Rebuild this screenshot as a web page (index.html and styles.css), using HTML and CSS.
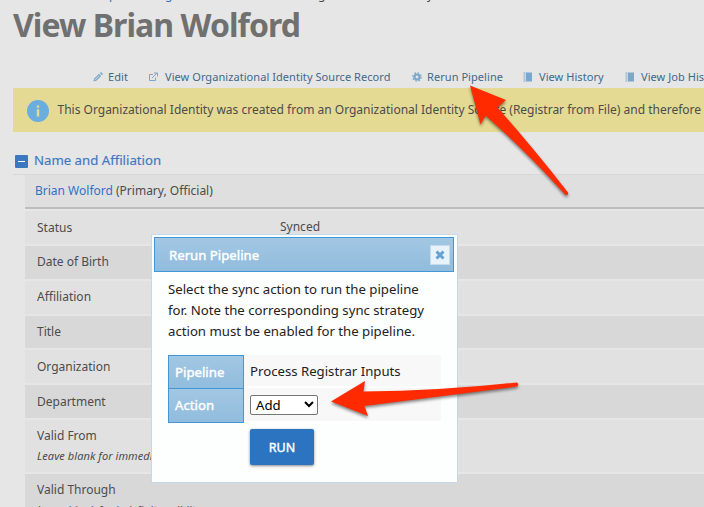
FILE: index.html
```html
<!DOCTYPE html>
<html lang="en">
<head>
<meta charset="utf-8">
<title>View Brian Wolford</title>
<link rel="stylesheet" href="styles.css">
</head>
<body>
<div class="crumbs"><span class="c1">p</span><span class="c2">g</span><span class="c3">g</span><span class="c4">y</span></div>
<h1><span>View Brian Wolford</span></h1>
<nav class="links">
  <a class="l1"><svg width="10" height="10" viewBox="0 0 10 10"><path d="M.4 9.6l.8-3 4.8-4.8 2.2 2.2-4.8 4.8z" fill="#7aa7cb"/><path d="M2 7.8l4-4" stroke="#e6e6e6" stroke-width=".9"/><path d="M6.8 1L8 0l2 2-1 1.200z" fill="#7aa7cb"/></svg><span>Edit</span></a>
  <a class="l2"><svg width="9" height="10" viewBox="0 0 9 10" fill="none" stroke="#7aa7cb"><path d="M4 2.500H.5v6h6V5.500M3 6L8 1M5 1h3.500v3.500"/></svg><span>View Organizational Identity Source Record</span></a>
  <a class="l3"><svg width="10" height="10" viewBox="0 0 10 10" fill="none" stroke="#7aa7cb"><circle cx="5" cy="5" r="2.500" stroke-width="2.200"/><circle cx="5" cy="5" r="4.100" stroke-width="1.400" stroke-dasharray="1.610"/></svg><span>Rerun Pipeline</span></a>
  <a class="l4"><svg width="10" height="10" viewBox="0 0 10 10"><path d="M3 .5h6v9H3z" fill="#7aa7cb"/><path d="M1.500 .5v9" stroke="#7aa7cb" stroke-width="2" stroke-dasharray="1 1"/></svg><span>View History</span></a>
  <a class="l5"><svg width="10" height="10" viewBox="0 0 10 10"><path d="M3 .5h6v9H3z" fill="#7aa7cb"/><path d="M1.500 .5v9" stroke="#7aa7cb" stroke-width="2" stroke-dasharray="1 1"/></svg><span>View Job History</span></a>
</nav>
<div class="notice">
  <svg width="22" height="22" viewBox="0 0 22 22"><circle cx="11" cy="11" r="11" fill="#6aaedf"/><path d="M9.800 5.500h2.400v2.200H9.800zM9.800 9.200h2.400v7.300H9.800z" fill="#e4da93"/></svg>
  <span>This Organizational Identity was created from an Organizational Identity Source (Registrar from File) and therefore</span>
</div>
<h2><i class="toggle"></i><span>Name and Affiliation</span></h2>
<div class="fields">
  <div class="name"><a>Brian Wolford</a> (Primary, Official)</div>
  <div class="row"><span class="label">Status</span><span class="value">Synced</span></div>
  <div class="row alt"><span class="label">Date of Birth</span></div>
  <div class="row"><span class="label">Affiliation</span></div>
  <div class="row alt"><span class="label">Title</span></div>
  <div class="row"><span class="label">Organization</span></div>
  <div class="row alt"><span class="label">Department</span></div>
  <div class="row tall"><span class="label">Valid From<em>Leave blank for immediate validity</em></span></div>
  <div class="row alt tall"><span class="label">Valid Through<em>Leave blank for indefinite validity</em></span></div>
</div>
<section class="dialog">
  <header><span>Rerun Pipeline</span><button class="close"><svg width="10" height="10" viewBox="0 0 10 10"><path d="M1.500 1.500l7 7M8.500 1.500l-7 7" stroke="#65a1d1" stroke-width="3"/></svg></button></header>
  <p>Select the sync action to run the pipeline<br>for. Note the corresponding sync strategy<br>action must be enabled for the pipeline.</p>
  <div class="grid">
    <div class="th">Pipeline</div><div class="td">Process Registrar Inputs</div>
    <div class="th">Action</div><div class="td"><div class="select"><span>Add</span><svg width="10" height="7" viewBox="0 0 10 7"><path d="M1 1l4 4 4-4" fill="none" stroke="#000" stroke-width="2"/></svg></div></div>
  </div>
  <button class="run">RUN</button>
</section>
<svg class="arrows" width="704" height="507" viewBox="0 0 704 507" fill="#ff2a00">
  <path d="M470 85.500L506 100 497.500 107.500Q535 150 568 192.500 569 195.500 565.500 195Q528 153 485.500 115.500L480.500 124.500z"/>
  <path d="M331 401.500L365 381 363.500 391.500Q440 391 517 382.500 519.500 384.500 517 386.500L364.500 406 368 416z"/>
</svg>
</body>
</html>
```

FILE: styles.css
```css
* { box-sizing: border-box; }
html, body { margin: 0; overflow: hidden; }
body { width: 704px; height: 507px; background: #e6e6e6; color: #4c4c4c; font: 12px/16px "Noto Sans", sans-serif; white-space: nowrap; position: relative; }
.crumbs { height: 4px; overflow: hidden; display: flex; color: #484848; line-height: 16px; }
.crumbs span { margin-top: -13px; width: 8px; }
.c1 { margin-left: 109px; color: #2d73c4; }
.c2 { margin-left: 48px; color: #2d73c4; }
.c3 { margin-left: 145px; }
.c4 { margin-left: 101px; }
h1 { margin: 0 0 0 13px; height: 61px; font-size: 32px; line-height: 41px; color: #707070; letter-spacing: -0.95px; }
.links { height: 23px; display: flex; align-items: center; color: #40698a; font-size: 11px; letter-spacing: .06px; }
.links a { display: flex; align-items: center; flex: none; }
.links svg { margin-right: 5px; }
.l1 { margin-left: 93px; width: 56px; }
.l2 { width: 263px; }
.links .l2 svg { margin-right: 7px; }
.l3 { width: 111px; }
.l4 { width: 102px; }
.l4 span, .l5 span { margin-left: 1px; }
.notice { margin-left: 13px; height: 44px; background: #e4da93; display: flex; align-items: center; padding-left: 14px; }
.notice svg { margin-right: 8.5px; flex: none; position: relative; top: 1px; }
h2 { margin: 0 0 0 13px; height: 43px; padding: 14px 0 0 2px; display: flex; align-items: center; font-size: 13.2px; font-weight: 400; color: #3c78c2; -webkit-text-stroke: .15px #3c78c2; border-bottom: 1px solid #d8d8d8; }
.toggle { width: 13px; height: 13px; margin-right: 6px; border-radius: 1px; background: linear-gradient(#fff,#fff) center/7px 1px no-repeat #3c78c2; position: relative; top: 1px; }
.fields { margin-left: 25px; }
.name { height: 34px; background: #dfdfdf; border-bottom: 2px solid #bebebe; padding: 8px 10px; margin-bottom: 2px; }
.name a { color: #3072c4; }
.row { height: 33px; margin-bottom: 2px; background: #e1e1e1; padding: 8px 12px; display: flex; }
.row:nth-child(2) { padding-top: 9px; }
.alt { background: #d8d8d8; }
.row:nth-child(5) { height: 32px; }
.row:nth-child(n+6) { padding-top: 9px; }
.row.tall:nth-child(n+6) { height: 52px; padding-top: 8px; }
.label { width: 243px; }
.value { margin-top: -1px; }
.label em { display: block; font-size: 11px; letter-spacing: .06px; margin-top: 4px; }
.dialog { position: absolute; left: 151px; top: 234px; width: 307px; height: 249px; border: 1px solid #c3d9e8; background: #fdfefe; color: #222; font-size: 13.2px; padding: 2px; }
header { width: 300px; height: 35px; border: 1px solid #4297d7; background: linear-gradient(#a2c7e3,#91bcdd); display: flex; align-items: center; justify-content: space-between; padding: 0 3px 0 14px; color: #fff; font-size: 13.2px; -webkit-text-stroke: .4px #fff; }
.close { width: 20px; height: 20px; padding: 0; border: 1px solid #c5dbec; background: #e8f2fb; display: grid; place-items: center; }
p { margin: 7px 0 13px 14px; line-height: 21px; }
.grid { margin-left: 14px; width: 273px; display: grid; grid-template-columns: 76px 1fr; grid-template-rows: 33px 35px; }
.th { border: 1px solid #4297d7; background: linear-gradient(#a2c7e3,#91bcdd); color: #fff; font-size: 13.2px; -webkit-text-stroke: .4px #fff; padding: 0 6px; display: flex; align-items: center; }
.th:nth-child(1) { border-bottom: 0; }
.th:nth-child(3) { padding-bottom: 2px; }
.td { background: #f8f8f8; padding: 0 6px; display: flex; align-items: center; border-bottom: 2px solid #fff; }
.select { width: 68px; height: 20px; border: 1px solid #767676; border-radius: 2px; background: #fff; color: #000; display: flex; align-items: center; justify-content: space-between; padding: 0 3px 0 5px; }
.run { display: block; margin: 6px 0 0 96px; width: 64px; height: 36px; border: 0; border-radius: 2px; background: #2c74c0; color: #fff; font: 400 12.5px "Noto Sans", sans-serif; -webkit-text-stroke: .4px #fff; box-shadow: 0 1px 3px #0007; }
.arrows { position: absolute; inset: 0; filter: drop-shadow(0 2px 1.500px #0007); }
```
